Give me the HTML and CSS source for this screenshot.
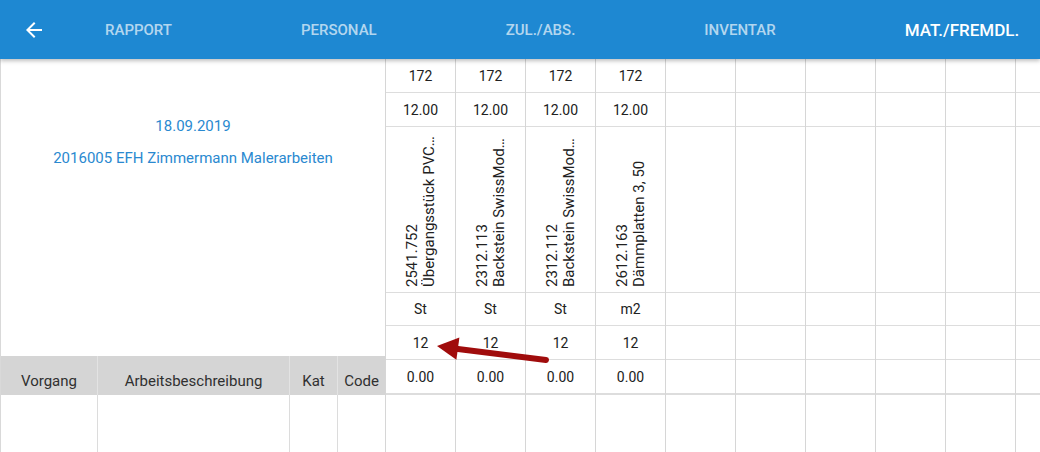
FILE: index.html
```html
<!DOCTYPE html>
<html lang="de">

<head>
    <meta charset="UTF-8">
    <meta name="viewport" content="width=device-width, initial-scale=1.0">
    <title>Material / Fremdleistungen</title>
    <link rel="stylesheet" href="styles.css">
</head>

<body>
    <header class="toolbar">
        <button class="back" aria-label="Zurück">
            <svg viewBox="0 0 24 24" width="24" height="24">
                <path d="M20 11H7.83l5.59-5.59L12 4l-8 8 8 8 1.41-1.41L7.83 13H20v-2z" fill="#fff"/>
            </svg>
        </button>
        <nav class="tabs">
            <span class="tab">Rapport</span>
            <span class="tab">Personal</span>
            <span class="tab">Zul./Abs.</span>
            <span class="tab">Inventar</span>
            <span class="tab active">Mat./Fremdl.</span>
        </nav>
    </header>

    <main class="sheet">
        <section class="info">
            <div class="info-head">
                <p class="date">18.09.2019</p>
                <p class="project">2016005 EFH Zimmermann Malerarbeiten</p>
            </div>
            <div class="cols cols-head">
                <div>Vorgang</div>
                <div>Arbeitsbeschreibung</div>
                <div>Kat</div>
                <div>Code</div>
            </div>
            <div class="cols cols-body">
                <div></div>
                <div></div>
                <div></div>
                <div></div>
            </div>
        </section>

        <section class="grid">
            <div class="col">
                <div class="cell">172</div>
                <div class="cell">12.00</div>
                <div class="cell name"><div class="label"><span>2541.752</span><span>Übergangsstück PVC schwarz 110</span></div></div>
                <div class="cell">St</div>
                <div class="cell">12</div>
                <div class="cell last">0.00</div>
                <div class="cell body"></div>
            </div>
            <div class="col">
                <div class="cell">172</div>
                <div class="cell">12.00</div>
                <div class="cell name"><div class="label"><span>2312.113</span><span>Backstein SwissModul 17.5</span></div></div>
                <div class="cell">St</div>
                <div class="cell">12</div>
                <div class="cell last">0.00</div>
                <div class="cell body"></div>
            </div>
            <div class="col">
                <div class="cell">172</div>
                <div class="cell">12.00</div>
                <div class="cell name"><div class="label"><span>2312.112</span><span>Backstein SwissModul 15</span></div></div>
                <div class="cell">St</div>
                <div class="cell">12</div>
                <div class="cell last">0.00</div>
                <div class="cell body"></div>
            </div>
            <div class="col">
                <div class="cell">172</div>
                <div class="cell">12.00</div>
                <div class="cell name"><div class="label"><span>2612.163</span><span>Dämmplatten 3, 50</span></div></div>
                <div class="cell">m2</div>
                <div class="cell">12</div>
                <div class="cell last">0.00</div>
                <div class="cell body"></div>
            </div>
            <div class="col">
                <div class="cell"></div><div class="cell"></div><div class="cell name"></div>
                <div class="cell"></div><div class="cell"></div><div class="cell last"></div><div class="cell body"></div>
            </div>
            <div class="col">
                <div class="cell"></div><div class="cell"></div><div class="cell name"></div>
                <div class="cell"></div><div class="cell"></div><div class="cell last"></div><div class="cell body"></div>
            </div>
            <div class="col">
                <div class="cell"></div><div class="cell"></div><div class="cell name"></div>
                <div class="cell"></div><div class="cell"></div><div class="cell last"></div><div class="cell body"></div>
            </div>
            <div class="col">
                <div class="cell"></div><div class="cell"></div><div class="cell name"></div>
                <div class="cell"></div><div class="cell"></div><div class="cell last"></div><div class="cell body"></div>
            </div>
            <div class="col">
                <div class="cell"></div><div class="cell"></div><div class="cell name"></div>
                <div class="cell"></div><div class="cell"></div><div class="cell last"></div><div class="cell body"></div>
            </div>
            <div class="col">
                <div class="cell"></div><div class="cell"></div><div class="cell name"></div>
                <div class="cell"></div><div class="cell"></div><div class="cell last"></div><div class="cell body"></div>
            </div>
        </section>

        <!-- Hinweis-Pfeil auf die Menge -->
        <svg class="pointer" viewBox="0 0 125 36" width="125" height="36">
            <line x1="26" y1="16.8" x2="116" y2="28" stroke="#a00c0c" stroke-width="6" stroke-linecap="round"/>
            <polygon points="7,14 29.4,5.6 26.4,27.8" fill="#a00c0c"/>
        </svg>
    </main>
</body>

</html>
```

FILE: styles.css
```css
body {
    margin: 0;
    font-family: Roboto, "Liberation Sans", Arial, sans-serif;
    color: #212121;
    background-color: white;
    overflow: hidden;
}

.toolbar {
    position: relative;
    z-index: 2;
    display: flex;
    align-items: center;
    height: 59px;
    background-color: #1e88d2;
    box-shadow: 0 2px 4px rgba(0, 0, 0, 0.25);
}

.back {
    display: flex;
    align-items: center;
    justify-content: center;
    width: 68px;
    height: 59px;
    padding: 0;
    border: none;
    background: none;
    cursor: pointer;
}

.tabs {
    display: flex;
    align-items: center;
    gap: 129px;
    margin-left: 37px;
}

.tab {
    font-size: 15px;
    font-weight: 500;
    text-transform: uppercase;
    color: rgba(255, 255, 255, 0.68);
    white-space: nowrap;
}

.tab.active {
    font-size: 17px;
    color: white;
}

.sheet {
    position: relative;
    display: flex;
    height: 393px;
}

.info {
    display: flex;
    flex-direction: column;
    width: 385px;
    box-sizing: border-box;
    flex-shrink: 0;
    border-left: 1px solid #d9d9d9;
}

.info-head {
    height: 297px;
    padding-top: 57px;
    box-sizing: border-box;
    text-align: center;
    color: #2a89d0;
    font-size: 15px;
}

.info-head p {
    margin: 0 0 12px;
    line-height: 20px;
}

.cols {
    display: grid;
    grid-template-columns: 96px 192px 48px 48px;
}

.cols-head {
    height: 39px;
    background-color: #d5d5d5;
    font-size: 15px;
    color: #303030;
}

.cols-head div {
    display: flex;
    align-items: flex-end;
    justify-content: center;
    padding-bottom: 5px;
    border-left: 1px solid #e3e3e3;
}

.cols-head div:first-child {
    border-left: none;
}

.cols-body {
    flex: 1;
}

.cols-body div {
    border-left: 1px solid #dcdcdc;
}

.cols-body div:first-child {
    border-left: none;
}

.grid {
    display: flex;
    flex: 1;
    overflow: hidden;
}

.col {
    display: grid;
    grid-template-rows: 34px 34px 166px 33px 34px 35px 1fr;
    width: 70px;
    box-sizing: border-box;
    flex-shrink: 0;
    border-left: 1px solid #d6d6d6;
}

.cell {
    display: flex;
    align-items: center;
    justify-content: center;
    border-bottom: 1px solid #dddddd;
    font-size: 14px;
}

.cell.last {
    border-bottom: 2px solid #dddddd;
}

.cell.body {
    border-bottom: none;
}

.label {
    writing-mode: vertical-rl;
    transform: rotate(180deg);
    height: 154px;
    font-size: 15px;
    line-height: 17px;
}

.label span {
    display: block;
    white-space: nowrap;
    overflow: hidden;
    text-overflow: ellipsis;
}

.pointer {
    position: absolute;
    left: 430px;
    top: 273px;
}
```
